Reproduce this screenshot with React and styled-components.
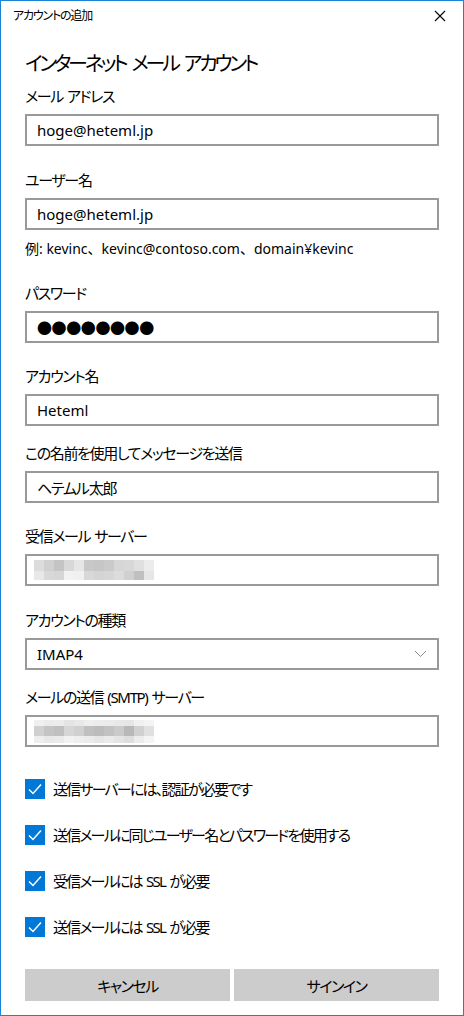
import React from 'react'
import styled, { createGlobalStyle } from 'styled-components'

const GlobalStyle = createGlobalStyle`
  html, body {
    margin: 0;
    padding: 0;
    background: #fff;
  }
  body {
    font-family: "Noto Sans", "Noto Sans CJK JP", sans-serif;
    color: #000;
  }
`

// gray levels for the blurred server host names (rows of mosaic blocks)
const incomingBlocks = [
  ['#dcdcdc', '#d0d0d0', '#c4c4c4', '#d8d8d8', '#e6e6e6', '#c8c8c8', '#c6c6c6', '#cacaca', '#d6d6d6', '#d8d8d8', '#e0e0e0', '#ececec'],
  ['#e8e8e8', '#d8d8d8', '#d6d6d6', '#f2f2f2', '#f0f0f0', '#d8d8d8', '#d4d4d4', '#d6d6d6', '#dcdcdc', '#d0d0d0', '#c0c0c0', '#e6e6e6'],
]

const outgoingBlocks = [
  ['#f0f0f0', '#ebebeb', '#ececec', '#e4e4e4', '#e8e8e8', '#eeeeee', '#ececec', '#ebebeb', '#e8e8e8', '#e6e6e6', '#f0f0f0', '#f4f4f4'],
  ['#d0d0d0', '#c4c4c4', '#c0c0c0', '#d6d6d6', '#d0d0d0', '#c0c0c0', '#bcbcbc', '#c2c2c2', '#cacaca', '#b8b8b8', '#d0d0d0', '#e0e0e0'],
  ['#eeeeee', '#e8e8e8', '#eaeaea', '#f2f2f2', '#eeeeee', '#ebebeb', '#e6e6e6', '#eaeaea', '#e4e4e4', '#dedede', '#ececec', '#f4f4f4'],
]

function Mosaic({ rows, rowHeights }) {
  const cols = rows[0].length
  const cw = 10
  let y = 0
  return (
    <svg width={cols * cw} height={rowHeights.reduce((a, b) => a + b, 0)}>
      {rows.map((row, r) => {
        const top = y
        y += rowHeights[r]
        return row.map((c, i) => (
          <rect key={`${r}-${i}`} x={i * cw} y={top} width={cw} height={rowHeights[r]} fill={c} />
        ))
      })}
    </svg>
  )
}

function CloseIcon() {
  return (
    <svg width="12" height="12" viewBox="0 0 12 12">
      <path d="M1 1L11 11M11 1L1 11" stroke="#000" strokeWidth="1.1" fill="none" />
    </svg>
  )
}

function Chevron() {
  return (
    <svg width="13" height="8" viewBox="0 0 13 8">
      <path d="M1 1L6.5 6.5L12 1" stroke="#8a8a8a" strokeWidth="1" fill="none" />
    </svg>
  )
}

function CheckMark() {
  return (
    <svg width="20" height="20" viewBox="0 0 20 20">
      <path d="M4 10.5L8 14.5L16 5.5" stroke="#fff" strokeWidth="1.5" fill="none" />
    </svg>
  )
}

function Field({ label, top, children }) {
  return (
    <FieldWrap $top={top}>
      <Label>{label}</Label>
      {children}
    </FieldWrap>
  )
}

function Check({ children }) {
  return (
    <CheckRow>
      <Box><CheckMark /></Box>
      <CheckText>{children}</CheckText>
    </CheckRow>
  )
}

export default function App() {
  return (
    <Window>
      <GlobalStyle />
      <TitleBar>
        <WindowTitle>アカウントの追加</WindowTitle>
        <CloseButton><CloseIcon /></CloseButton>
      </TitleBar>

      <Content>
        <Heading>インターネット メール アカウント</Heading>

        <Field label="メール アドレス" top={8}>
          <Input>hoge@heteml.jp</Input>
        </Field>

        <Field label="ユーザー名" top={24}>
          <Input>hoge@heteml.jp</Input>
        </Field>
        <Hint>例: kevinc、kevinc@contoso.com、domain¥kevinc</Hint>

        <Field label="パスワード" top={24}>
          <Input><Dots>●●●●●●●●</Dots></Input>
        </Field>

        <Field label="アカウント名" top={23}>
          <Input>Heteml</Input>
        </Field>

        <Field label="この名前を使用してメッセージを送信" top={17}>
          <Input $jp>ヘテムル太郎</Input>
        </Field>

        <Field label="受信メール サーバー" top={23}>
          <Input $blur>
            <Mosaic rows={incomingBlocks} rowHeights={[11, 9]} />
          </Input>
        </Field>

        <Field label="アカウントの種類" top={24}>
          <Select>
            <span>IMAP4</span>
            <Chevron />
          </Select>
        </Field>

        <Field label="メールの送信 (SMTP) サーバー" top={17}>
          <Input $blur>
            <Mosaic rows={outgoingBlocks} rowHeights={[6, 10, 7]} />
          </Input>
        </Field>

        <Checks>
          <Check>送信サーバーには、認証が必要です</Check>
          <Check>送信メールに同じユーザー名とパスワードを使用する</Check>
          <Check>受信メールには SSL が必要</Check>
          <Check>送信メールには SSL が必要</Check>
        </Checks>

        <Buttons>
          <Button>キャンセル</Button>
          <Button>サインイン</Button>
        </Buttons>
      </Content>
    </Window>
  )
}

const Window = styled.div`
  width: 464px;
  height: 1016px;
  box-sizing: border-box;
  border: 1px solid #1883d7;
  background: #fff;
  display: flex;
  flex-direction: column;
  font-feature-settings: "palt";
`

const TitleBar = styled.div`
  height: 31px;
  display: flex;
  align-items: center;
  justify-content: space-between;
  padding: 0 0 0 12px;
`

const WindowTitle = styled.div`
  font-size: 12px;
  line-height: 16px;
  margin-top: -2px;
  letter-spacing: -0.1em;
`

const CloseButton = styled.div`
  width: 46px;
  height: 31px;
  display: flex;
  align-items: center;
  justify-content: center;
  svg { margin-top: -1px; }
`

const Content = styled.div`
  padding: 0 24px 0 24px;
  display: flex;
  flex-direction: column;
`

const Heading = styled.h1`
  margin: 18px 0 0;
  font-size: 20px;
  font-weight: 400;
  line-height: 28px;
  letter-spacing: -0.16em;
  word-spacing: 0.2em;
`

const FieldWrap = styled.div`
  margin-top: ${p => p.$top}px;
  display: flex;
  flex-direction: column;
  gap: 8px;
`

const Label = styled.div`
  font-size: 15px;
  line-height: 20px;
  letter-spacing: -0.09em;
  word-spacing: 0.1em;
`

const Input = styled.div`
  height: 32px;
  box-sizing: border-box;
  border: 2px solid #999;
  padding: 0 ${p => (p.$blur ? 0 : 10)}px 0 ${p => (p.$blur ? 7 : 10)}px;
  display: flex;
  align-items: center;
  font-size: 15px;
  letter-spacing: ${p => (p.$jp ? '-0.08em' : '0')};
`

const Dots = styled.span`
  font-size: 15px;
  letter-spacing: -0.4px;
  margin-top: 1px;
`

const Select = styled(Input)`
  justify-content: space-between;
  padding-right: 10px;
`

const Hint = styled.div`
  margin-top: 9px;
  font-size: 14px;
  line-height: 20px;
  font-feature-settings: normal;
`

const Checks = styled.div`
  margin-top: 32px;
  display: flex;
  flex-direction: column;
  gap: 26px;
`

const CheckRow = styled.div`
  display: flex;
  align-items: center;
  gap: 8px;
  height: 20px;
`

const Box = styled.div`
  width: 20px;
  height: 20px;
  background: #0078d7;
  flex: none;
`

const CheckText = styled.span`
  font-size: 15px;
  line-height: 20px;
  letter-spacing: -0.12em;
  word-spacing: 0.15em;
`

const Buttons = styled.div`
  margin-top: 32px;
  display: grid;
  grid-template-columns: 1fr 1fr;
  gap: 4px;
`

const Button = styled.button`
  height: 32px;
  border: none;
  background: #cccccc;
  font-family: inherit;
  font-size: 15px;
  color: #000;
  font-feature-settings: "palt";
  letter-spacing: -0.1em;
`
